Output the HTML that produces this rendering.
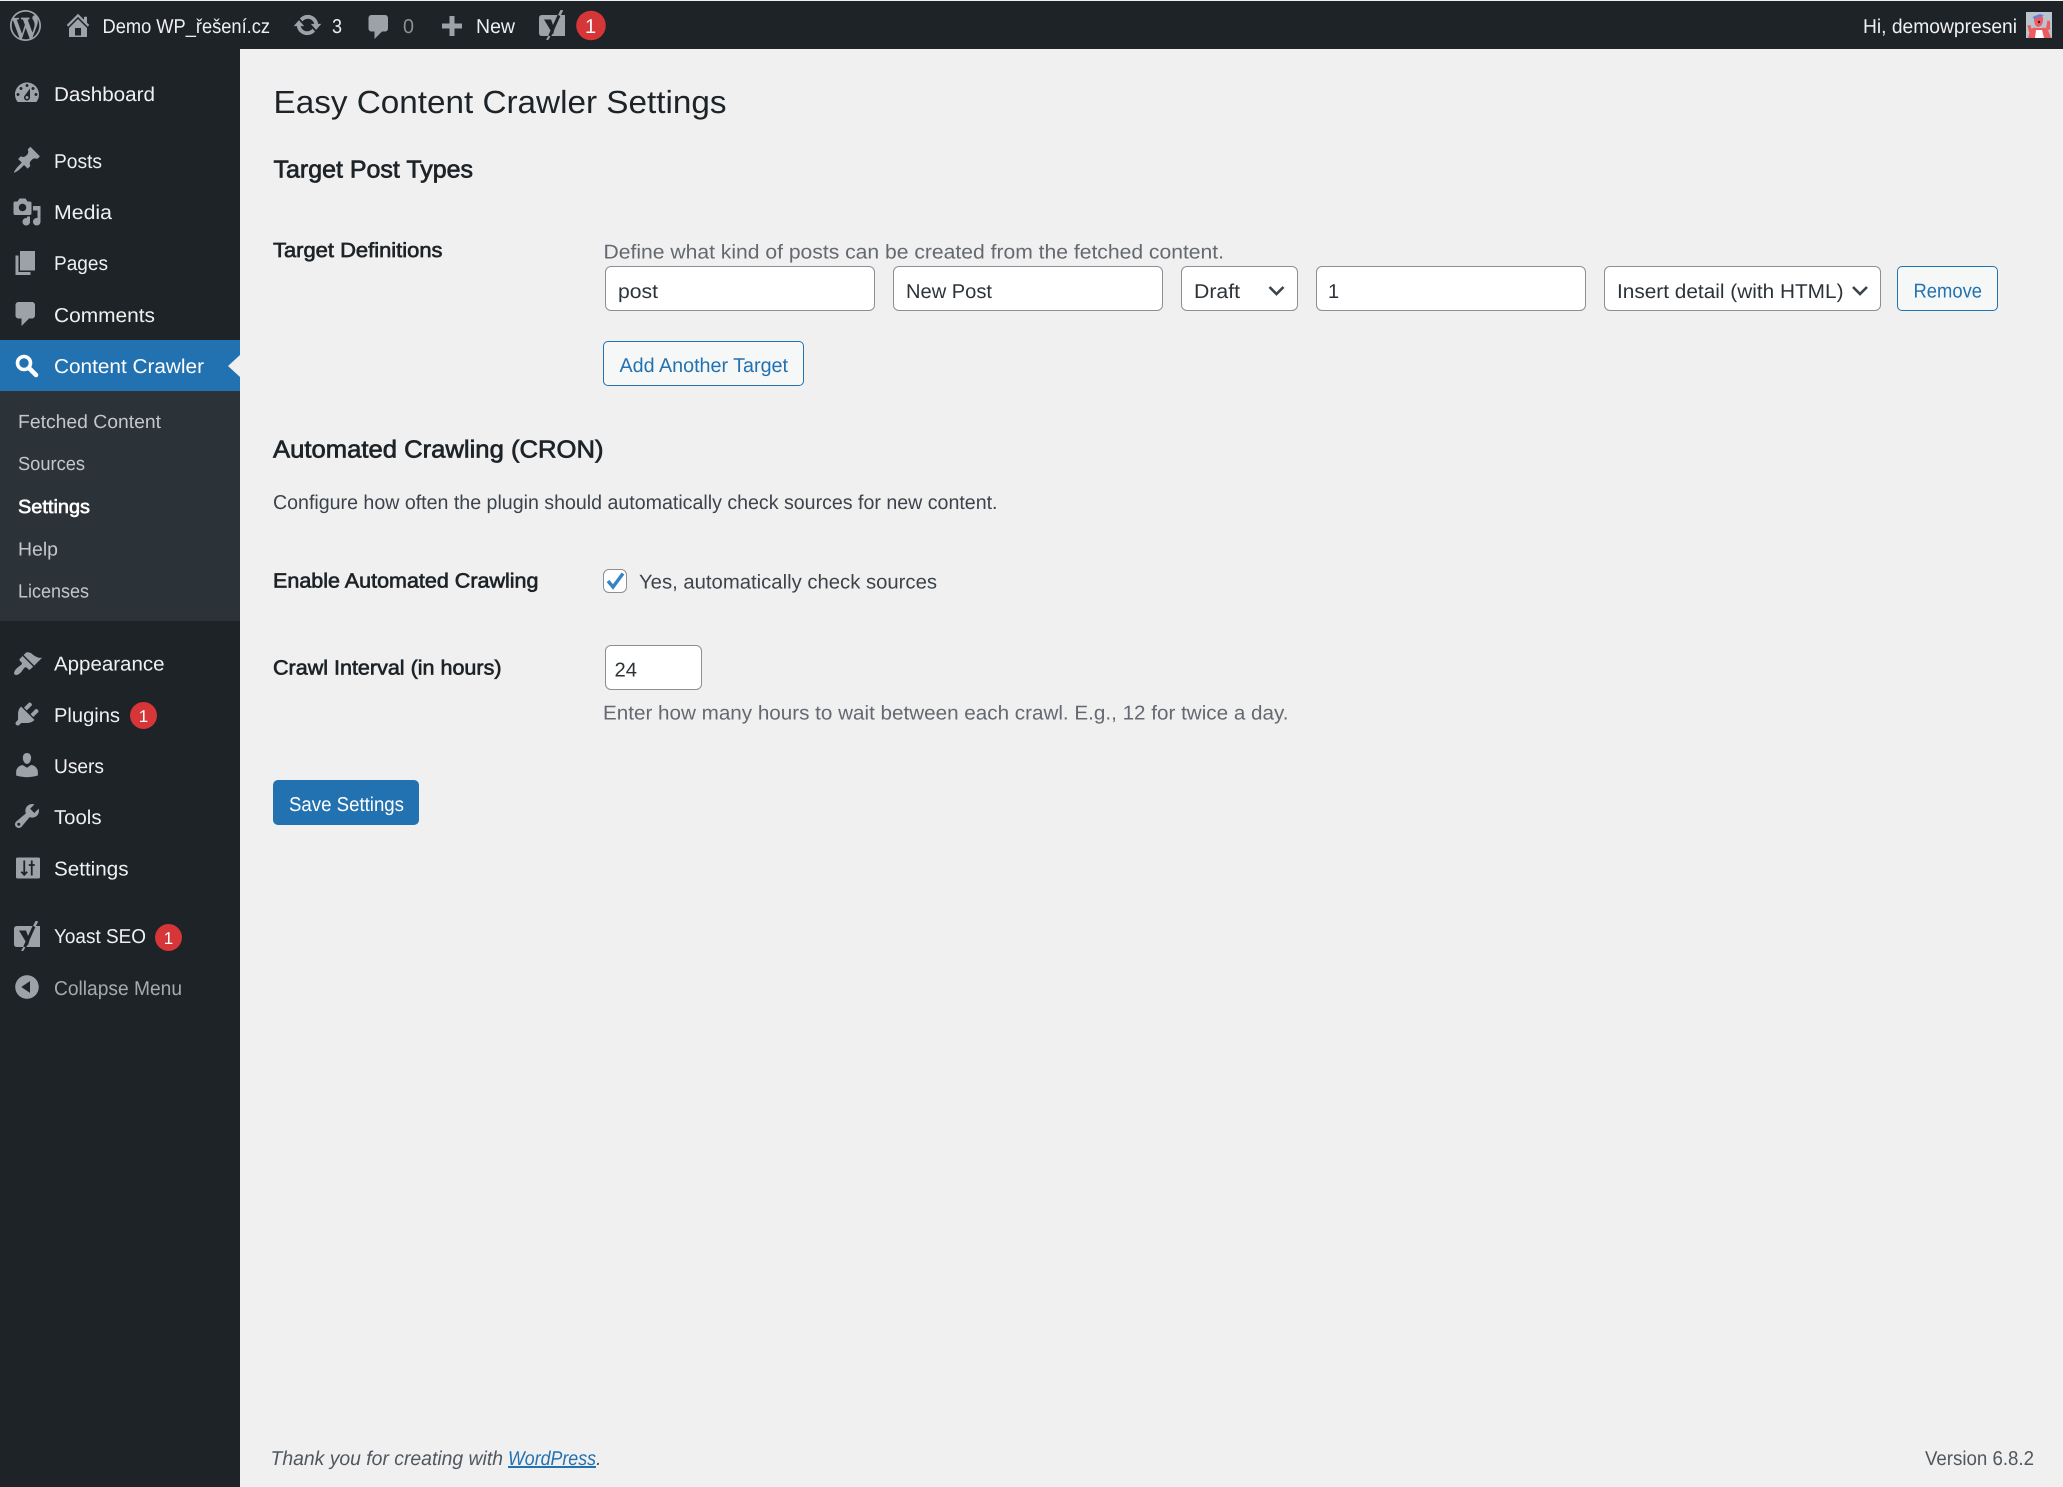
<!DOCTYPE html>
<html lang="en">
<head>
<meta charset="utf-8">
<title>Easy Content Crawler Settings</title>
<style>
html,body{margin:0;padding:0;background:#f0f0f1;}
body{position:relative;width:2063px;height:1487px;overflow:hidden;font-family:"Liberation Sans",sans-serif;}
.b{position:absolute;box-sizing:border-box;}
.in{background:#fff;border:1.5px solid #8c8f94;border-radius:6px;}
.btn{background:#f6f7f7;border:1.5px solid #2271b1;border-radius:5px;}
svg.o{position:absolute;left:0;top:0;}
text{font-family:"Liberation Sans","Noto Sans CJK SC",sans-serif;font-size:20px;text-rendering:geometricPrecision;}
.w{fill:#f0f0f1}
.sub{fill:#c3c6ca;font-size:19px}
.lab{fill:#1d2327;stroke:#1d2327;stroke-width:.65px;font-size:20.5px}
.desc{fill:#646970}
.ctl{fill:#2c3338}
.h2{fill:#1d2327;stroke:#1d2327;stroke-width:.7px;font-size:24.5px}
.ic{fill:#9ca2a7}
</style>
</head>
<body>
<div class="b" style="left:0;top:1px;width:2063px;height:48px;background:#1d2327"></div>
<div class="b" style="left:0;top:49px;width:240px;height:1438px;background:#1d2327"></div>
<div class="b" style="left:0;top:391px;width:240px;height:230px;background:#2c3338"></div>
<div class="b" style="left:0;top:340px;width:240px;height:51px;background:#2271b1"></div>

<div class="b in" style="left:605px;top:266px;width:270px;height:45px"></div>
<div class="b in" style="left:893px;top:266px;width:270px;height:45px"></div>
<div class="b in" style="left:1181px;top:266px;width:117px;height:45px"></div>
<div class="b in" style="left:1316px;top:266px;width:270px;height:45px"></div>
<div class="b in" style="left:1604px;top:266px;width:277px;height:45px"></div>
<div class="b btn" style="left:1897px;top:266px;width:101px;height:45px"></div>
<div class="b btn" style="left:603px;top:341px;width:201px;height:45px"></div>
<div class="b in" style="left:603px;top:569px;width:24px;height:24px;border-radius:6px"></div>
<div class="b in" style="left:605px;top:645px;width:97px;height:45px"></div>
<div class="b" style="left:273px;top:780px;width:146px;height:45px;background:#2271b1;border-radius:5px"></div>

<svg class="o" width="2063" height="1487" viewBox="0 0 2063 1487" xmlns="http://www.w3.org/2000/svg">
<defs>
<symbol id="yo" viewBox="0 0 26 30">
  <path d="M3 5H26V26H3Q0 26 0 23V8Q0 5 3 5Z" fill="#9ca2a7"/>
  <path d="M5 9.5H12L15.5 19L14 24.5Z" fill="#1d2327"/>
  <path d="M20.2 5L10.5 26.5" stroke="#1d2327" stroke-width="3" fill="none"/>
  <path d="M23 0L20.2 5.5" stroke="#9ca2a7" stroke-width="2.6" fill="none"/>
  <path d="M10.5 26L8 30" stroke="#9ca2a7" stroke-width="2" fill="none"/>
</symbol>
</defs>

<!-- Admin bar icons -->
<svg x="10" y="10" width="31" height="31" viewBox="0 0 20 20"><path class="ic" d="M20 10c0-5.51-4.49-10-10-10C4.48 0 0 4.49 0 10c0 5.52 4.48 10 10 10 5.51 0 10-4.48 10-10zM7.78 15.37L4.37 6.22c.55-.02 1.17-.08 1.17-.08.5-.06.44-1.13-.06-1.11 0 0-1.45.11-2.37.11-.18 0-.37 0-.58-.01C4.12 2.69 6.87 1.11 10 1.11c2.33 0 4.45.87 6.05 2.34-.68-.11-1.65.39-1.65 1.58 0 .74.45 1.36.9 2.1.35.61.55 1.36.55 2.46 0 1.49-1.4 5-1.4 5l-3.03-8.37c.54-.02.82-.17.82-.17.5-.05.44-1.25-.06-1.22 0 0-1.44.12-2.38.12-.87 0-2.33-.12-2.33-.12-.5-.03-.56 1.2-.06 1.22l.92.08 1.26 3.41zM17.41 10c.24-.64.74-1.87.43-4.25.7 1.29 1.05 2.71 1.05 4.25 0 3.29-1.73 6.24-4.4 7.78.97-2.59 1.94-5.2 2.92-7.78zM6.1 18.09C3.12 16.65 1.11 13.53 1.11 10c0-1.3.23-2.48.72-3.59C3.25 10.3 4.67 14.2 6.1 18.09zm4.03-6.63l2.58 6.98c-.86.29-1.76.45-2.71.45-.79 0-1.57-.11-2.29-.33.81-2.38 1.62-4.74 2.42-7.1z"/></svg>
<svg x="63" y="10" width="30" height="30" viewBox="0 0 20 20"><path class="ic" fill-rule="evenodd" d="M16 8.5l1.53 1.53-1.06 1.06L10 4.62l-6.47 6.47-1.06-1.06L10 2.5l4 4v-2h2v4zm-6-2.46l6 5.99V18H4v-5.97zM12 17v-5H8v5h4z"/></svg>
<svg x="292.5" y="10" width="30" height="30" viewBox="0 0 20 20"><path class="ic" d="M10.2 3.28c3.53 0 6.43 2.61 6.92 6h2.08l-3.5 4-3.5-4h2.32c-.45-1.97-2.21-3.45-4.32-3.45-1.45 0-2.73.71-3.54 1.78L4.95 5.66C6.23 4.2 8.11 3.28 10.2 3.28zm-.4 13.44c-3.52 0-6.43-2.61-6.92-6H.8l3.5-4c1.17 1.33 2.33 2.67 3.5 4H5.48c.45 1.97 2.21 3.45 4.32 3.45 1.45 0 2.73-.71 3.54-1.78l1.71 1.95c-1.28 1.46-3.15 2.38-5.25 2.38z"/></svg>
<svg x="364" y="12" width="30" height="30" viewBox="0 0 20 20"><path class="ic" d="M5 2h9c1.1 0 2 .9 2 2v7c0 1.1-.9 2-2 2h-2l-5 5v-5H5c-1.1 0-2-.9-2-2V4c0-1.1.9-2 2-2z"/></svg>
<rect x="442" y="23.5" width="20" height="5" class="ic"/><rect x="449.5" y="16" width="5" height="20" class="ic"/>
<use href="#yo" x="539" y="10" width="26" height="30"/>
<circle cx="591" cy="25.5" r="14.8" fill="#d63638"/>

<!-- Avatar -->
<svg x="2026" y="12" width="26" height="26" viewBox="0 0 26 26">
  <rect width="26" height="26" fill="#b9c4ce"/>
  <path d="M2 26L4 18Q7 15 10 16L16 16Q20 15 22 18L25 26Z" fill="#ee5a5f"/>
  <path d="M9 26L10 18H16L18 26Z" fill="#fff"/>
  <path d="M8 6Q8 3 13 3Q18 3 17 9Q16 15 12 15Q8 14 8 6Z" fill="#ee5a5f"/>
  <path d="M6.5 5L14 2L18 3.5L8 7Z" fill="#6b7fd8"/>
  <circle cx="13" cy="10" r="1.2" fill="#1d2327"/>
  <path d="M20 17L21.5 8L24 9.5L24 18Z" fill="#ee5a5f"/>
  <path d="M3 20L1.5 13.5L4.5 13L6 19Z" fill="#ee5a5f"/>
</svg>

<!-- Admin bar text -->
<text class="w" x="102.5" y="33" textLength="167.5" lengthAdjust="spacingAndGlyphs">Demo WP_řešení.cz</text>
<text class="w" x="332" y="33" textLength="10" lengthAdjust="spacingAndGlyphs">3</text>
<text x="403" y="33" textLength="11" lengthAdjust="spacingAndGlyphs" fill="#8c8f94">0</text>
<text class="w" x="476" y="33" textLength="39" lengthAdjust="spacingAndGlyphs">New</text>
<text x="590.5" y="33" text-anchor="middle" fill="#fff">1</text>
<text class="w" x="1863" y="33" textLength="154" lengthAdjust="spacingAndGlyphs">Hi, demowpreseni</text>

<!-- Sidebar icons -->
<svg x="12" y="78" width="30" height="30" viewBox="0 0 20 20"><path class="ic" fill-rule="evenodd" d="M3.76 16h12.48c1.1-1.37 1.76-3.11 1.76-5 0-4.42-3.58-8-8-8s-8 3.58-8 8c0 1.89.66 3.63 1.76 5zM10 4c.55 0 1 .45 1 1s-.45 1-1 1-1-.45-1-1 .45-1 1-1zM6 6c.55 0 1 .45 1 1s-.45 1-1 1-1-.45-1-1 .45-1 1-1zm8 0c.55 0 1 .45 1 1s-.45 1-1 1-1-.45-1-1 .45-1 1-1zm-5.37 5.55L12 7v6c0 1.1-.9 2-2 2s-2-.9-2-2c0-.57.24-1.08.63-1.45zM4 10c.55 0 1 .45 1 1s-.45 1-1 1-1-.45-1-1 .45-1 1-1zm12 0c.55 0 1 .45 1 1s-.45 1-1 1-1-.45-1-1 .45-1 1-1zm-5 3c0-.55-.45-1-1-1s-1 .45-1 1 .45 1 1 1 1-.45 1-1z"/></svg>
<svg x="12" y="145" width="30" height="30" viewBox="0 0 20 20"><path class="ic" d="M10.44 3.02l1.82-1.82 6.36 6.35-1.83 1.82c-1.05-.68-2.48-.57-3.41.36l-.75.75c-.92.93-1.04 2.35-.35 3.41l-1.83 1.82-2.41-2.41-2.8 2.79c-.42.42-3.38 2.71-3.8 2.29s1.86-3.39 2.28-3.81l2.79-2.79L4.1 9.36l1.83-1.82c1.05.69 2.48.57 3.4-.36l.75-.75c.93-.92 1.05-2.35.36-3.41z"/></svg>
<svg x="12" y="197" width="30" height="30" viewBox="0 0 20 20"><path class="ic" fill-rule="evenodd" d="M13 11V4c0-.55-.45-1-1-1h-1.67L9 1H5L3.67 3H2c-.55 0-1 .45-1 1v7c0 .55.45 1 1 1h10c.55 0 1-.45 1-1zM7 4.5c1.38 0 2.5 1.12 2.5 2.5S8.38 9.5 7 9.5 4.5 8.38 4.5 7 5.62 4.5 7 4.5zM14 6h5v10.5c0 1.38-1.12 2.5-2.5 2.5S14 17.88 14 16.5s1.12-2.5 2.5-2.5c.17 0 .34.02.5.05V9h-3V6zm-4 8.05V13h2v3.5c0 1.38-1.12 2.5-2.5 2.5S7 17.88 7 16.5 8.12 14 9.5 14c.17 0 .34.02.5.05z"/></svg>
<svg x="11" y="248" width="30" height="30" viewBox="0 0 20 20"><path class="ic" d="M6 15V2h10v13H6zm-1 1h8v2H3V5h2v11z"/></svg>
<svg x="11" y="299" width="30" height="30" viewBox="0 0 20 20"><path class="ic" d="M5 2h9c1.1 0 2 .9 2 2v7c0 1.1-.9 2-2 2h-2l-5 5v-5H5c-1.1 0-2-.9-2-2V4c0-1.1.9-2 2-2z"/></svg>
<circle cx="24" cy="363" r="6.5" fill="none" stroke="#fff" stroke-width="3.6"/>
<path d="M29 368L36 375" stroke="#fff" stroke-width="4.6" stroke-linecap="round"/>
<path d="M240 355L228 366L240 377Z" fill="#f0f0f1"/>

<svg x="12.5" y="649" width="30" height="30" viewBox="0 0 20 20"><path class="ic" d="M14.48 11.06L7.41 3.99l1.5-1.5c.5-.56 2.3-.47 3.51.32 1.21.8 1.43 1.28 2.91 2.1 1.18.64 2.45 1.26 4.45.85zm-.71.71L6.7 4.7 4.93 6.47c-.39.39-.39 1.02 0 1.41l1.06 1.06c.39.39.39 1.03 0 1.42-.6.6-1.43 1.11-2.21 1.69-.35.26-.7.53-1.01.84-1.43 1.43-2.2 3.23-1.33 4.1.87.87 2.67.1 4.1-1.33.31-.31.58-.66.84-1.01.58-.78 1.09-1.61 1.69-2.21.39-.39 1.03-.39 1.42 0l1.06 1.06c.39.39 1.02.39 1.41 0z"/></svg>
<svg x="12" y="699" width="30" height="30" viewBox="0 0 20 20"><path class="ic" d="M13.11 4.36L9.87 7.6 8 5.73l3.24-3.24c.35-.34 1.05-.2 1.56.32.52.51.66 1.21.31 1.55zm-8 1.77l.91-1.12 9.01 9.01-1.19.84c-.71.71-2.63 1.16-3.82 1.16H6.14L4.9 17.26c-.59.59-1.54.59-2.12 0-.59-.58-.59-1.53 0-2.12l1.24-1.24v-3.88c0-1.13.4-3.19 1.09-3.89zm7.26 3.97l3.24-3.24c.34-.35 1.04-.21 1.55.31.52.51.66 1.21.31 1.55l-3.24 3.25z"/></svg>
<svg x="12" y="750" width="30" height="30" viewBox="0 0 20 20"><path class="ic" d="M10 9.25c-2.27 0-2.73-3.44-2.73-3.44C7 4.02 7.82 2 9.97 2c2.16 0 2.98 2.02 2.71 3.81 0 0-.41 3.44-2.68 3.44zm0 2.57L12.72 10c2.39 0 4.52 2.33 4.52 4.53v2.49s-3.65 1.13-7.24 1.13c-3.65 0-7.24-1.13-7.24-1.13v-2.49c0-2.25 1.94-4.48 4.47-4.48z"/></svg>
<svg x="12" y="801" width="30" height="30" viewBox="0 0 20 20"><path class="ic" fill-rule="evenodd" d="M16.68 9.77c-1.34 1.34-3.3 1.67-4.95.99l-5.41 6.52c-.99.99-2.59.99-3.58 0s-.99-2.59 0-3.57l6.52-5.42c-.68-1.65-.35-3.61.99-4.95 1.28-1.28 3.12-1.62 4.72-1.06l-2.89 2.89 2.82 2.82 2.86-2.87c.53 1.58.18 3.39-1.08 4.65zM3.81 16.21c.4.39 1.04.39 1.43 0 .4-.4.4-1.04 0-1.43-.39-.4-1.03-.4-1.43 0-.39.39-.39 1.03 0 1.43z"/></svg>
<svg x="13" y="853" width="30" height="30" viewBox="0 0 20 20"><rect x="2" y="3" width="16" height="14" rx="1" class="ic"/><path d="M7.5 5v10M5.5 12.5L7.5 14.5L9.5 12.5M12.5 15V5M10.5 8H14.5" stroke="#1d2327" stroke-width="1.2" fill="none"/></svg>
<use href="#yo" x="14" y="921" width="26" height="30"/>
<svg x="12" y="972" width="30" height="30" viewBox="0 0 20 20"><path class="ic" fill-rule="evenodd" d="M10 2.16c4.33 0 7.84 3.51 7.84 7.84s-3.51 7.84-7.84 7.84S2.16 14.33 2.16 10 5.71 2.16 10 2.16zm2 11.72V6.12L6.18 9.97z"/></svg>

<!-- Sidebar text -->
<text class="w" x="54" y="101" textLength="101" lengthAdjust="spacingAndGlyphs">Dashboard</text>
<text class="w" x="54" y="168" textLength="48" lengthAdjust="spacingAndGlyphs">Posts</text>
<text class="w" x="54" y="219" textLength="58" lengthAdjust="spacingAndGlyphs">Media</text>
<text class="w" x="54" y="270" textLength="54" lengthAdjust="spacingAndGlyphs">Pages</text>
<text class="w" x="54" y="322" textLength="101" lengthAdjust="spacingAndGlyphs">Comments</text>
<text x="54" y="373" textLength="150" lengthAdjust="spacingAndGlyphs" fill="#fff">Content Crawler</text>
<text class="sub" x="18" y="428" textLength="143" lengthAdjust="spacingAndGlyphs">Fetched Content</text>
<text class="sub" x="18" y="470" textLength="67" lengthAdjust="spacingAndGlyphs">Sources</text>
<text x="18" y="513" textLength="72" lengthAdjust="spacingAndGlyphs" fill="#fff" stroke="#fff" stroke-width=".6" style="font-size:19px">Settings</text>
<text class="sub" x="18" y="555.5" textLength="40" lengthAdjust="spacingAndGlyphs">Help</text>
<text class="sub" x="18" y="597.5" textLength="71" lengthAdjust="spacingAndGlyphs">Licenses</text>
<text class="w" x="54" y="670.5" textLength="110.5" lengthAdjust="spacingAndGlyphs">Appearance</text>
<text class="w" x="54" y="722" textLength="66" lengthAdjust="spacingAndGlyphs">Plugins</text>
<circle cx="143.5" cy="715.5" r="13.5" fill="#d63638"/>
<text x="143.5" y="722" text-anchor="middle" fill="#fff" style="font-size:17px">1</text>
<text class="w" x="54" y="773" textLength="50" lengthAdjust="spacingAndGlyphs">Users</text>
<text class="w" x="54" y="824" textLength="47.5" lengthAdjust="spacingAndGlyphs">Tools</text>
<text class="w" x="54" y="875.5" textLength="74.5" lengthAdjust="spacingAndGlyphs">Settings</text>
<text class="w" x="54" y="943" textLength="92" lengthAdjust="spacingAndGlyphs">Yoast SEO</text>
<circle cx="168.5" cy="937.5" r="13.5" fill="#d63638"/>
<text x="168.5" y="944" text-anchor="middle" fill="#fff" style="font-size:17px">1</text>
<text x="54" y="995" textLength="128" lengthAdjust="spacingAndGlyphs" fill="#a7aaad">Collapse Menu</text>

<!-- Main text -->
<text x="273.5" y="113" textLength="453" lengthAdjust="spacingAndGlyphs" fill="#1d2327" style="font-size:32px">Easy Content Crawler Settings</text>
<text class="h2" x="273.5" y="177.5" textLength="199.5" lengthAdjust="spacingAndGlyphs">Target Post Types</text>
<text class="lab" x="273" y="257" textLength="169.5" lengthAdjust="spacingAndGlyphs">Target Definitions</text>
<text class="desc" x="603.5" y="258.5" textLength="620.5" lengthAdjust="spacingAndGlyphs">Define what kind of posts can be created from the fetched content.</text>
<text class="ctl" x="618" y="298" textLength="40" lengthAdjust="spacingAndGlyphs">post</text>
<text class="ctl" x="906" y="298" textLength="86" lengthAdjust="spacingAndGlyphs">New Post</text>
<text class="ctl" x="1194" y="298" textLength="46" lengthAdjust="spacingAndGlyphs">Draft</text>
<path d="M1269.5 287L1276.5 294L1283.5 287" fill="none" stroke="#3c434a" stroke-width="2.6"/>
<text class="ctl" x="1328" y="298">1</text>
<text class="ctl" x="1617" y="298" textLength="226.5" lengthAdjust="spacingAndGlyphs">Insert detail (with HTML)</text>
<path d="M1853 287L1860 294L1867 287" fill="none" stroke="#3c434a" stroke-width="2.6"/>
<text x="1913.5" y="297.5" textLength="68.5" lengthAdjust="spacingAndGlyphs" fill="#2271b1">Remove</text>
<text x="619.5" y="372" textLength="168.5" lengthAdjust="spacingAndGlyphs" fill="#2271b1">Add Another Target</text>
<text class="h2" x="273" y="457.5" textLength="330.5" lengthAdjust="spacingAndGlyphs">Automated Crawling (CRON)</text>
<text x="273" y="509" textLength="724.5" lengthAdjust="spacingAndGlyphs" fill="#3c434a">Configure how often the plugin should automatically check sources for new content.</text>
<text class="lab" x="273" y="587.5" textLength="265.5" lengthAdjust="spacingAndGlyphs">Enable Automated Crawling</text>
<path d="M608 581L613 587L623 573.5" fill="none" stroke="#3582c4" stroke-width="3.4"/>
<text x="639" y="588.5" textLength="298" lengthAdjust="spacingAndGlyphs" fill="#3c434a">Yes, automatically check sources</text>
<text class="lab" x="273" y="674.5" textLength="228.5" lengthAdjust="spacingAndGlyphs">Crawl Interval (in hours)</text>
<text class="ctl" x="614.5" y="676.5" textLength="22.5" lengthAdjust="spacingAndGlyphs">24</text>
<text class="desc" x="603" y="719.5" textLength="685.5" lengthAdjust="spacingAndGlyphs">Enter how many hours to wait between each crawl. E.g., 12 for twice a day.</text>
<text x="289" y="811" textLength="115" lengthAdjust="spacingAndGlyphs" fill="#fff">Save Settings</text>

<!-- Footer -->
<text x="270.5" y="1465" font-style="italic" fill="#50575e" textLength="232.5" lengthAdjust="spacingAndGlyphs">Thank you for creating with</text>
<text x="508" y="1465" font-style="italic" fill="#2271b1" text-decoration="underline" textLength="88" lengthAdjust="spacingAndGlyphs">WordPress</text>
<text x="596" y="1465" font-style="italic" fill="#50575e">.</text>
<text x="1925" y="1465" fill="#50575e" textLength="109" lengthAdjust="spacingAndGlyphs">Version 6.8.2</text>
<rect x="0" y="0" width="2063" height="1" fill="#f0f0f1"/>
</svg>
</body>
</html>
